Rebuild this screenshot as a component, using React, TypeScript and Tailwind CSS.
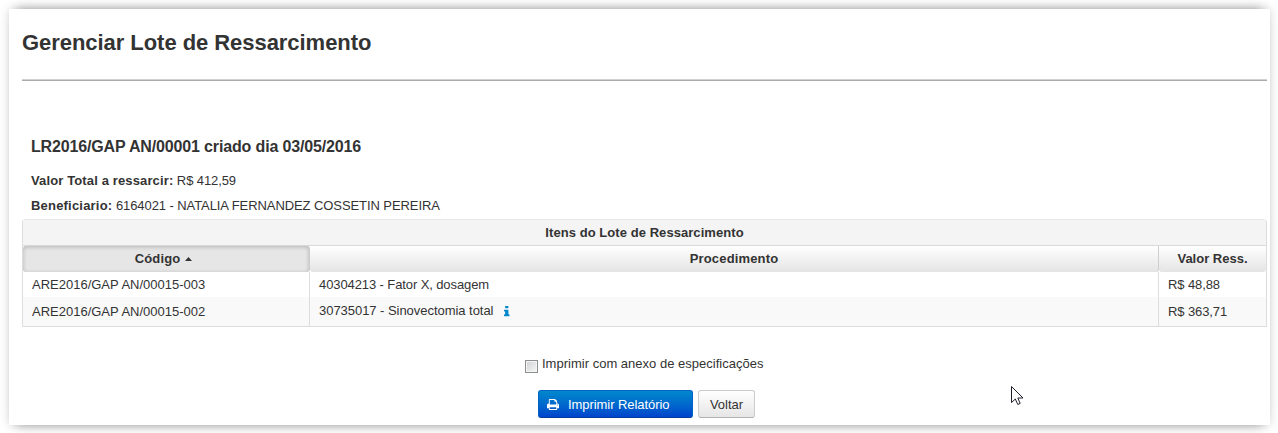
const columns = "grid grid-cols-[287px_849px_107px]";

const rows = [
  { code: "ARE2016/GAP AN/00015-003", item: "40304213 - Fator X, dosagem", value: "R$ 48,88", info: false },
  { code: "ARE2016/GAP AN/00015-002", item: "30735017 - Sinovectomia total", value: "R$ 363,71", info: true },
];

function InfoIcon() {
  return (
    <svg className="mt-[8px] ml-[11px] h-[13px] w-[5.5px]" viewBox="0 0 640 1792" preserveAspectRatio="none" fill="#0088cc">
      <path d="M640 1344v128q0 26-19 45t-45 19h-512q-26 0-45-19t-19-45v-128q0-26 19-45t45-19h64v-384h-64q-26 0-45-19t-19-45v-128q0-26 19-45t45-19h384q26 0 45 19t19 45v576h64q26 0 45 19t19 45zM512 192v192q0 26-19 45t-45 19h-256q-26 0-45-19t-19-45v-192q0-26 19-45t45-19h256q26 0 45 19t19 45z" />
    </svg>
  );
}

function PrintIcon() {
  return (
    <svg className="h-[13px] w-[12px]" viewBox="0 0 1664 1792" fill="currentColor">
      <path d="M384 1536h896v-256h-896v256zM384 896h896v-384h-160q-40 0-68-28t-28-68v-160h-640v640zM1536 960q0-26-19-45t-45-19-45 19-19 45 19 45 45 19 45-19 19-45zM1664 960v416q0 13-9.5 22.5t-22.5 9.5h-224v160q0 40-28 68t-68 28h-960q-40 0-68-28t-28-68v-160h-224q-13 0-22.5-9.5t-9.5-22.5v-416q0-79 56.5-135.5t135.5-56.5h64v-544q0-40 28-68t68-28h672q40 0 88 20t76 48l152 152q28 28 48 76t20 88v256h64q79 0 135.5 56.5t56.5 135.5z" />
    </svg>
  );
}

function ItemsTable() {
  return (
    <section className="w-[1245px] rounded-t-[4px] border border-[#dddddd] border-t-[#e8e8e8]">
      <h3 className="h-[25px] rounded-t-[3px] bg-[#f4f4f4] text-center text-[13px] leading-[26px] font-bold tracking-[0.06px]">
        Itens do Lote de Ressarcimento
      </h3>
      <div className={columns + " h-[27px] border-t border-[#d9d9d9] text-center leading-[25px] font-bold"}>
        <div className="flex items-start justify-center gap-[5px] rounded-[3px] border-r border-[#cccccc] bg-[#e6e6e6] pr-[5px] shadow-[inset_0_1px_4px_rgba(0,0,0,0.22)]">
          <span className="tracking-[0.15px]">Código</span>
          <svg className="mt-[11px]" width="7" height="4" viewBox="0 0 7 4"><path d="M0 4 3.5 0 7 4Z" fill="#333" /></svg>
        </div>
        <div className="rounded-b-[3px] border-r border-[#cfcfcf] bg-linear-to-b from-white to-[#e4e4e4] tracking-[0.15px]">Procedimento</div>
        <div className="rounded-b-[3px] bg-linear-to-b from-white to-[#e4e4e4]">Valor Ress.</div>
      </div>
      {rows.map((row, i) => (
        <div key={row.code} className={columns + (i ? " h-[29px] bg-[#f9f9f9]" : " h-[25px] bg-white")}>
          <div className={"border-r border-[#dddddd] pl-[9px] " + (i ? "leading-[29px]" : "leading-[26px]")}>{row.code}</div>
          <div className={"flex border-r border-[#dddddd] pl-[9px] " + (i ? "leading-[28px] tracking-[-0.04px]" : "leading-[26px] tracking-[-0.1px]")}>
            <span>{row.item}</span>
            {row.info && <InfoIcon />}
          </div>
          <div className={"pl-[9px] tracking-[-0.1px] " + (i ? "leading-[29px]" : "leading-[26px]")}>{row.value}</div>
        </div>
      ))}
    </section>
  );
}

export default function App() {
  return (
    <div className="relative h-[433px] w-[1278px] overflow-hidden bg-white px-[9px] pt-[9px] font-['Liberation_Sans',Arial,sans-serif] text-[13px] leading-[18px] text-[#333333]">
      <main className="h-[416px] w-[1261px] bg-white pl-[13px] shadow-[0_0_10px_rgba(0,0,0,0.16),0_-8px_10px_-8px_rgba(0,0,0,0.32),0_8px_10px_-8px_rgba(0,0,0,0.32)]">
        <h1 className="h-[70px] pt-[19px] text-[22px] leading-[30px] font-bold tracking-[-0.05px]">Gerenciar Lote de Ressarcimento</h1>
        <div className="h-[2px] w-[1245px] border-t border-b border-t-[#d2d2d2] border-b-[#aaaaaa]" />
        <div className="h-[138px] pt-[56px] pl-[9px]">
          <h2 className="text-[16px] leading-[20px] font-bold tracking-[-0.15px]">LR2016/GAP AN/00001 criado dia 03/05/2016</h2>
          <p className="mt-[15px] tracking-[-0.1px]"><b className="tracking-[0.13px]">Valor Total a ressarcir:</b> R$ 412,59</p>
          <p className="mt-[7px] tracking-[-0.08px]"><b className="tracking-[0.2px]">Beneficiario:</b> 6164021 - NATALIA FERNANDEZ COSSETIN PEREIRA</p>
        </div>
        <ItemsTable />
        <label className="mt-[28px] ml-[503px] flex h-[20px] w-[250px] gap-[4px]">
          <input type="checkbox" className="mt-[5px] size-[13px] shrink-0 appearance-none border border-[#8e8f8f] bg-linear-to-br from-[#cfd2d5] to-[#f6f6f6] shadow-[inset_0_0_0_1px_#f4f4f4]" />
          <span className="tracking-[0.01px]">Imprimir com anexo de especificações</span>
        </label>
        <div className="mt-[15px] ml-[516px] flex gap-[5px]">
          <button className="flex h-[28px] w-[155px] items-center gap-[9px] rounded-[3px] border border-[#0062c4] border-b-[#003c9e] bg-linear-to-b from-[#0088cc] to-[#0044cc] pl-[8px] text-white">
            <PrintIcon />
            <span className="pt-px tracking-[-0.06px]">Imprimir Relatório</span>
          </button>
          <button className="h-[28px] w-[57px] rounded-[3px] border border-[#cccccc] border-b-[#b3b3b3] bg-linear-to-b from-white to-[#e6e6e6] pt-px">Voltar</button>
        </div>
      </main>
      <svg className="absolute top-[386px] left-[1011px]" width="13" height="20" viewBox="0 0 13 20">
        <path d="M.5.5V16.5L4.3 13 6.8 18.5 9.2 17.4 6.8 12H12Z" fill="#fff" stroke="#20202c" />
      </svg>
    </div>
  );
}
